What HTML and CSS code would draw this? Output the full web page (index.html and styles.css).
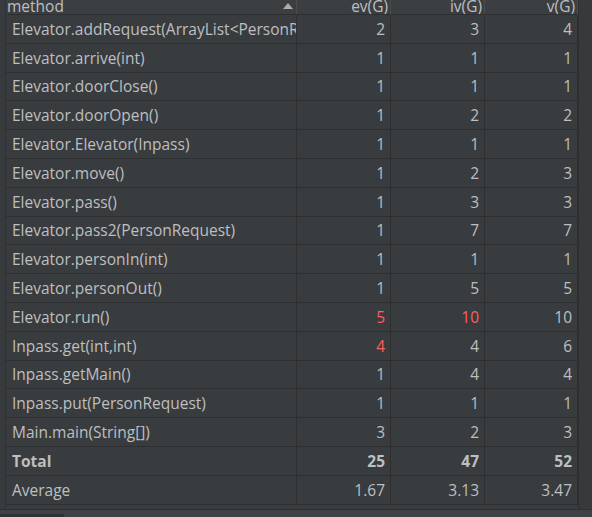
FILE: index.html
```html
<!DOCTYPE html>
<html>
<head>
<meta charset="utf-8">
<link rel="stylesheet" href="styles.css">
</head>
<body>
<div class="frame">
  <div class="gutter"></div>
  <div class="table">
    <div class="row head">
      <div class="cell name hcell"><span>method</span><span class="sort"></span></div>
      <div class="cell num hcell">ev(G)</div>
      <div class="cell num hcell">iv(G)</div>
      <div class="cell num hcell">v(G)</div>
    </div>
    <div class="row"><div class="cell name">Elevator.addRequest(ArrayList&lt;PersonRequest&gt;)</div><div class="cell num">2</div><div class="cell num">3</div><div class="cell num">4</div></div>
    <div class="row"><div class="cell name">Elevator.arrive(int)</div><div class="cell num">1</div><div class="cell num">1</div><div class="cell num">1</div></div>
    <div class="row"><div class="cell name">Elevator.doorClose()</div><div class="cell num">1</div><div class="cell num">1</div><div class="cell num">1</div></div>
    <div class="row"><div class="cell name">Elevator.doorOpen()</div><div class="cell num">1</div><div class="cell num">2</div><div class="cell num">2</div></div>
    <div class="row"><div class="cell name">Elevator.Elevator(Inpass)</div><div class="cell num">1</div><div class="cell num">1</div><div class="cell num">1</div></div>
    <div class="row"><div class="cell name">Elevator.move()</div><div class="cell num">1</div><div class="cell num">2</div><div class="cell num">3</div></div>
    <div class="row"><div class="cell name">Elevator.pass()</div><div class="cell num">1</div><div class="cell num">3</div><div class="cell num">3</div></div>
    <div class="row"><div class="cell name">Elevator.pass2(PersonRequest)</div><div class="cell num">1</div><div class="cell num">7</div><div class="cell num">7</div></div>
    <div class="row"><div class="cell name">Elevator.personIn(int)</div><div class="cell num">1</div><div class="cell num">1</div><div class="cell num">1</div></div>
    <div class="row"><div class="cell name">Elevator.personOut()</div><div class="cell num">1</div><div class="cell num">5</div><div class="cell num">5</div></div>
    <div class="row"><div class="cell name">Elevator.run()</div><div class="cell num red">5</div><div class="cell num red">10</div><div class="cell num">10</div></div>
    <div class="row"><div class="cell name">Inpass.get(int,int)</div><div class="cell num red">4</div><div class="cell num">4</div><div class="cell num">6</div></div>
    <div class="row"><div class="cell name">Inpass.getMain()</div><div class="cell num">1</div><div class="cell num">4</div><div class="cell num">4</div></div>
    <div class="row"><div class="cell name">Inpass.put(PersonRequest)</div><div class="cell num">1</div><div class="cell num">1</div><div class="cell num">1</div></div>
    <div class="row"><div class="cell name">Main.main(String[])</div><div class="cell num">3</div><div class="cell num">2</div><div class="cell num">3</div></div>
    <div class="row bold"><div class="cell name">Total</div><div class="cell num">25</div><div class="cell num">47</div><div class="cell num">52</div></div>
    <div class="row"><div class="cell name">Average</div><div class="cell num">1.67</div><div class="cell num">3.13</div><div class="cell num">3.47</div></div>
  </div>
  <div class="rightstrip"></div>
</div>
<div class="scrollbar"><div class="thumb"></div></div>
</body>
</html>
```

FILE: styles.css
```css
html, body {
  margin: 0;
  padding: 0;
  background: #3a3d3f;
  width: 592px;
  height: 517px;
  overflow: hidden;
  font-family: "Open Sans", "Noto Sans", sans-serif;
  font-size: 15.5px;
  color: #bdbfc1;
}
.frame {
  display: flex;
  height: 509px;
}
.gutter {
  width: 6px;
  border-right: 1px solid #2e3032;
  box-sizing: border-box;
  background: #383b3d;
}
.table {
  width: 572px;
  display: flex;
  flex-direction: column;
}
.rightstrip {
  flex: 1;
  background: #37393b;
  border-left: 1px solid #2e3032;
}
.row {
  display: grid;
  grid-template-columns: 291px 94px 94px 93px;
  height: 28.8px;
  flex: 0 0 28.8px;
}
.row.head {
  height: 15px;
  flex: 0 0 15px;
  background: #3c3f41;
}
.cell {
  box-sizing: border-box;
  border-right: 1px solid #2d2f31;
  border-bottom: 1px solid #2d2f31;
  background: #393c3e;
  display: flex;
  align-items: center;
  white-space: nowrap;
  overflow: hidden;
}
.cell.name {
  padding-left: 6px;
}
.cell.num {
  justify-content: flex-end;
  padding-right: 5px;
}
.hcell {
  background: #3c3f41;
  line-height: 13px;
  align-items: flex-start;
  border-right: 1px solid #4a4d4f;
  border-bottom: 1px solid #2d2f31;
}
.hcell.name {
  padding-left: 1px;
  justify-content: space-between;
}
.hcell.num {
  padding-right: 2px;
}
.sort {
  width: 0;
  height: 0;
  border-left: 5px solid transparent;
  border-right: 5px solid transparent;
  border-bottom: 6px solid #a9abad;
  margin: 3px 3px 0 0;
}
.red {
  color: #ff5c5c;
}
.bold .cell {
  font-weight: 700;
}
.scrollbar {
  height: 8px;
  border-top: 1px solid #2e3032;
  background: #3f4244;
  display: flex;
  align-items: flex-end;
}
.thumb {
  width: 64px;
  height: 4px;
  background: #2f3133;
}
```
